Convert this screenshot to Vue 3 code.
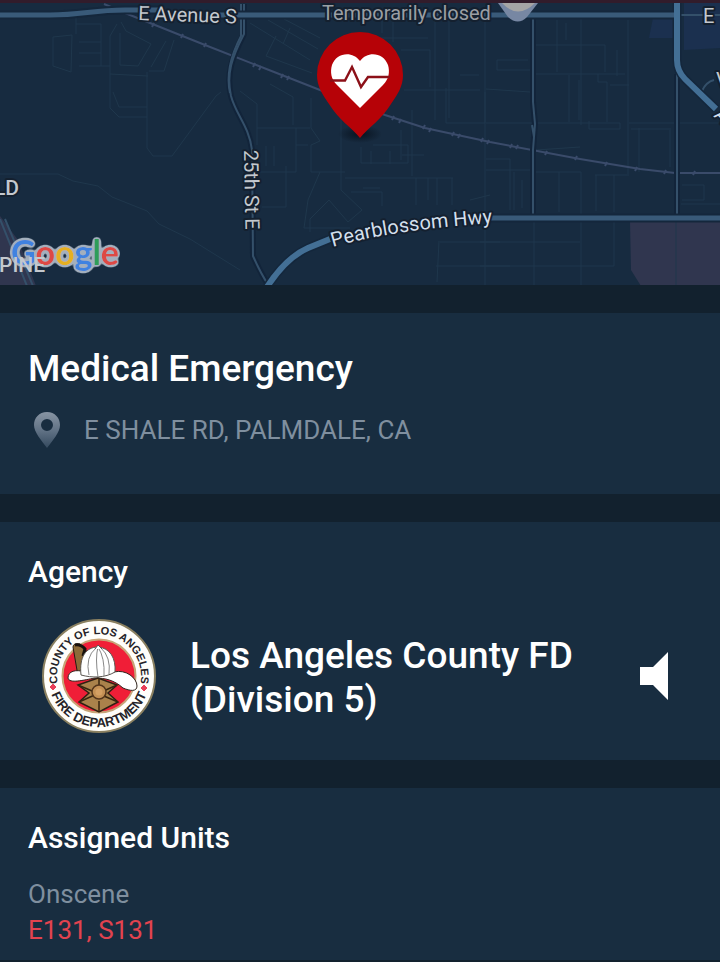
<script setup>
import { ref } from 'vue'

const playing = ref(false)

const agency = 'Los Angeles County FD (Division 5)'
const units = ['E131', 'S131']
const railTicks = [
  [153, 25], [182, 36], [205, 45], [254, 65], [260, 68], [282, 76], [288, 78],
  [393, 118], [400, 121], [424, 127], [430, 130], [453, 134], [459, 136],
  [482, 140], [488, 142], [511, 146], [517, 147], [546, 153], [576, 158],
  [606, 164], [636, 169], [665, 172], [694, 173],
]
const logo = [
  { ch: 'G', color: '#3f82e0' },
  { ch: 'o', color: '#dd4a45' },
  { ch: 'o', color: '#e5b021' },
  { ch: 'g', color: '#3f82e0' },
  { ch: 'l', color: '#2e9d5a' },
  { ch: 'e', color: '#dd4a45' },
]
</script>

<template>
  <main class="page">
    <section class="map-panel" aria-label="Map">
      <svg class="map" viewBox="0 0 720 282">
        <g transform="translate(0 -3)">
          <rect y="3" width="720" height="283" fill="#172b40" />

          <!-- land areas -->
          <path d="M0 216 L18 240 L36 286 H0Z" fill="#30364f" />
          <path d="M630 221 H720 V286 H641 L631 270Z" fill="#30364f" />
          <path d="M653 18 H674 V38 H649Z M684 3 H720 V48 L684 50Z" fill="#1b304f" />

          <!-- minor streets -->
          <g class="minor">
            <path d="M76 16 V34 M76 24 H101 V66 M53 37 L72 35 L71 72 L53 66Z M79 42 H101 M79 53 H101 M79 66 H110 M117 24 L110 36 V108 L119 117 H147 M121 22 L126 31 L151 44 L138 66 L120 65 V33 M110 74 L148 76 M113 92 L119 107 H147 M174 40 L164 71 H149 M166 41 L151 67 M147 72 V148 L153 156 H172 L216 96 L221 92" />
            <path d="M0 174 H58 L73 181 L98 186 L112 197 L147 211 L159 224 L190 239 L240 270" />
            <path d="M268 20 L318 49 M250 23 L310 60 M284 19 L320 38 M276 36 L266 56 L312 73 M290 28 L283 44 M240 91 L257 104 V145 M257 128 H310 M270 84 L293 97 V125 M296 145 H308 M296 128 V172 H258 M266 146 V166 M274 146 V166 M311 98 V128 L320 141 L311 145 V172 H345 M341 113 V190 L362 210 L348 222 L329 200 L310 219 V232 M320 172 L308 200 L304 228 H350 M262 207 H286 V166 M345 178 H453 M373 145 H408 V163 H361 V147 M390 151 V164 M412 110 V176 M371 164 V151 M351 192 H382 V206 M363 188 H380" />
            <path d="M401 130 V160 M402 155 H424 M416 178 V205 M428 178 V200 M437 178 V205 M452 178 V205 M382 18 V33 M370 38 H428 M393 22 V42 M401 50 H430 V87 M435 12 V120 M449 18 V118 M460 75 H479 M404 90 H480 M446 88 V123 H485 V92 M470 200 L490 195 M439 241 L437 282 M440 242 H500 M436 266 H510" />
            <path d="M485 18 V285 M497 60 H528 M497 60 V70 H530 M486 89 L530 92 M557 20 V72 M566 23 V40 M533 45 H605 V72 M581 17 V125 M533 74 H625 M628 20 V174 M617 50 V76 M569 75 V122 M579 80 V120 M598 74 V82 H607 V122 M629 85 H610 M486 123 H620 V129 H589 V121 M629 123 H720 M639 128 V172 M670 128 V167 M631 129 H669 M536 150 L580 147 M486 159 H510 V210 M486 170 H530 M536 172 H581 V285 M514 172 V210 M522 180 V208 M559 172 V212 M596 175 V211 M614 175 V212 M595 175 H629 M682 185 H704 V200 H682 M681 204 H720 M480 242 H580 M480 266 H614 V222 M534 222 V285 M676 222 V285" />
          </g>

          <!-- railway -->
          <path class="rail" d="M104 4 L125 13 L205 45 L320 90 L385 115 L425 128 L490 142 L580 159 L640 169 L675 173 H720" />
          <path v-for="(t, i) in railTicks" :key="i" class="rail" :d="`M${t[0] - 1} ${t[1] + 2} L${t[0] + 1} ${t[1] - 2}`" />

          <!-- secondary roads -->
          <g class="casing">
            <path d="M244 4 V34 C232 57 226 74 231 96 C236 115 249 126 252 150 L253 256 Q261 274 269 286" />
            <path d="M533 17 V102 L535 124 L533 150 V216 M677 74 V216" />
          </g>
          <g class="secondary">
            <path d="M244 4 V34 C232 57 226 74 231 96 C236 115 249 126 252 150 L253 256 Q261 274 269 286" />
            <path d="M241 4 V36 C230 57 226 75 230 93" />
            <path d="M533 17 V102 L535 124 L533 150 V216 M532 125 L534 137 M677 74 V216 M678 15 H720 M702 91 Q706 82 714 80" />
            <path d="M0 219 L27 286 M5 219 L33 286" />
          </g>

          <!-- main roads -->
          <g class="casing-wide">
            <path d="M0 15 H50 C83 15 92 10 125 10 H160 M205 15 H677 M677 3 V60 Q677 71 685 79 L716 109 M267 287 C280 267 292 255 308 248 L330 239 M488 218 H720" />
          </g>
          <path class="primary" d="M0 15 H50 C83 15 92 10 125 10 H160 M205 15 H677" />
          <path class="primary" d="M488 218 H720" />
          <path class="highway" d="M677 3 V60 Q677 71 685 79 L716 109 M267 287 C280 267 292 255 308 248 L330 239" />

          <!-- neighbouring place marker -->
          <path d="M498 3 H538 L527 17 Q518 26 508 17Z" fill="#7787a3" />
          <path d="M502 3 H535 Q518 20 502 3Z" fill="#a5a5a5" />

          <!-- street and place names -->
          <g class="label">
            <text x="138" y="20" transform="rotate(2 138 20)">E Avenue S</text>
            <text x="703" y="23">E</text>
            <text x="716" y="87">V</text>
            <text class="bright" transform="translate(713 116) rotate(44)">A</text>
            <text transform="translate(244 150) rotate(89)">25th St E</text>
            <path id="pearblossom" d="M333 247 Q390 230 495 223" fill="none" stroke="none" />
            <text class="bright"><textPath href="#pearblossom">Pearblossom Hwy</textPath></text>
            <text class="muted" x="322" y="20">Temporarily closed</text>
            <text class="place" x="-6" y="195">LD</text>
          </g>

          <!-- map provider logo -->
          <defs>
            <filter id="logo-rim" x="-10%" y="-20%" width="120%" height="140%">
              <feGaussianBlur in="SourceAlpha" stdDeviation="2" />
              <feComponentTransfer result="spread">
                <feFuncA type="linear" slope="9" intercept="-0.7" />
              </feComponentTransfer>
              <feFlood flood-color="#a3afbd" />
              <feComposite in2="spread" operator="in" result="rim" />
              <feMerge>
                <feMergeNode in="rim" />
                <feMergeNode in="SourceGraphic" />
              </feMerge>
            </filter>
          </defs>
          <text class="logo" x="11" y="265" filter="url(#logo-rim)"><tspan v-for="(l, i) in logo" :key="i" :fill="l.color">{{ l.ch }}</tspan></text>
          <text class="place over-logo" x="-1" y="272">PINE</text>

          <!-- incident pin -->
          <defs>
            <radialGradient id="pin-shadow">
              <stop offset="0" stop-color="#07101b" stop-opacity="0.9" />
              <stop offset="1" stop-color="#07101b" stop-opacity="0" />
            </radialGradient>
          </defs>
          <ellipse cx="360" cy="134" rx="22" ry="9" fill="url(#pin-shadow)" />
          <path d="M360 138 C352 128 338 119 329 104 C322 94 317 86 317 75 A43 43 0 0 1 403 75 C403 86 398 94 391 104 C382 119 368 128 360 138Z" fill="#b60207" />
          <path d="M360 108 L337 85 C331 79 330 72 332 65 C336 53 352 50 360 61 C368 50 384 53 388 65 C390 72 389 79 383 85Z" fill="#fff" />
          <path d="M330 80.500 H345 L352 67 L361 87 L368 77 H390" fill="none" stroke="#8c1018" stroke-width="2.400" />
        </g>
      </svg>
    </section>

    <section class="card incident">
      <h1>Medical Emergency</h1>
      <p class="address">
        <svg class="place-icon" viewBox="0 0 28 38" aria-hidden="true">
          <defs>
            <linearGradient id="pin-fade" x1="0" y1="0" x2="0" y2="1">
              <stop offset="0" stop-color="#8794a3" />
              <stop offset="0.500" stop-color="#627386" />
              <stop offset="1" stop-color="#354a5f" />
            </linearGradient>
          </defs>
          <path fill-rule="evenodd" d="M14 1 C6 1 1 7 1 14 C1 21 8 29 14 37 C20 29 27 21 27 14 C27 7 22 1 14 1Z M14 8 A6 6 0 1 1 14 20 A6 6 0 1 1 14 8Z" fill="url(#pin-fade)" />
        </svg>
        <span>E SHALE RD, PALMDALE, CA</span>
      </p>
    </section>

    <section class="card agency">
      <h2>Agency</h2>
      <div class="agency-row">
        <svg class="seal" viewBox="0 0 116 116">
          <defs>
            <path id="seal-top" d="M18.500 72.400 A42 42 0 1 1 97.500 72.400" />
            <path id="seal-bottom" d="M7 58 A51 51 0 0 0 109 58" />
          </defs>
          <circle cx="58" cy="58" r="56" fill="#fffefa" stroke="#8a8060" stroke-width="2" />
          <circle cx="58" cy="58" r="36.500" fill="#f01e37" stroke="#c7a477" stroke-width="2" />
          <text class="seal-text seal-long" text-anchor="middle"><textPath href="#seal-top" startOffset="50%">COUNTY OF LOS ANGELES</textPath></text>
          <text class="seal-text" text-anchor="middle"><textPath href="#seal-bottom" startOffset="50%">FIRE DEPARTMENT</textPath></text>
          <path d="M12 66 L15 69 L12 72 L9 69Z M103 67 L106 70 L103 73 L100 70Z" fill="#e8405a" stroke="#e8405a" />
          <!-- helmet -->
          <path d="M37 58 L32 29 Q32 25 39 26 L45 32 V58Z" fill="#8c6b38" stroke="#251b12" />
          <path d="M34 27 Q40 26 44 31 L42 38" fill="none" stroke="#17110d" stroke-width="3" />
          <path d="M27 60 C27 53 35 51 44 54 H73 C85 51 96 60 96 68 C96 74 89 73 82 70 C73 62 64 60 54 60 C43 62 28 66 27 60Z" fill="#fff" stroke="#30251e" />
          <path d="M40 57 C38 39 45 29 57 29 C69 30 75 40 74 54 C64 60 51 60 40 57Z" fill="#fff" stroke="#5a5650" />
          <path d="M48 57 Q44 39 55 30 M57 59 Q54 40 57 29 Q64 40 63 58 M68 56 Q70 39 60 30" fill="none" stroke="#888" />
          <path d="M54 31 L57 27 L61 31" fill="#fff" stroke="#555" />
          <!-- maltese cross -->
          <path d="M37 67 L57 60 L76 67 L67 75 L77 84 L58 94 L38 84 L48 75Z" fill="#aa824b" stroke="#2f2013" stroke-width="1.500" />
          <path d="M37 67 L77 84 M76 67 L38 84 M58 60 V67 M58 83 V94" stroke="#38260f" stroke-width="1.500" />
          <circle cx="58" cy="74" r="7" fill="#c49054" stroke="#54351b" stroke-width="1.500" />
          <circle cx="58" cy="74" r="3.500" fill="#d5a063" />
        </svg>
        <p class="agency-name">{{ agency }}</p>
        <button class="speaker" type="button" aria-label="Listen" :aria-pressed="playing" @click="playing = !playing">
          <svg viewBox="0 0 28 48" aria-hidden="true"><path d="M0 15 H13 L28 0 V48 L13 33 H0Z" fill="#fff" /></svg>
        </button>
      </div>
    </section>

    <section class="card units">
      <h2>Assigned Units</h2>
      <p class="status">Onscene</p>
      <p class="unit-list">{{ units.join(', ') }}</p>
    </section>
  </main>
</template>

<style>
body {
  background: #12212e;
}
</style>

<style scoped>
.page {
  display: flex;
  flex-direction: column;
  gap: 28px;
  font-family: Roboto, "Liberation Sans", sans-serif;
  color: #fff;
  background: #12212e;
  padding-bottom: 2px;
}

h1,
h2,
p {
  margin: 0;
}

.map-panel {
  border-top: 3px solid #321c2b;
  overflow: hidden;
}

.map {
  display: block;
  width: 100%;
}

.minor {
  fill: none;
  stroke: #1f374c;
  stroke-width: 1;
}

.rail {
  fill: none;
  stroke: #3a4b6a;
  stroke-width: 2;
}

.casing {
  fill: none;
  stroke: #12243a;
  stroke-width: 6;
}

.casing-wide {
  fill: none;
  stroke: #14273c;
  stroke-width: 9;
}

.secondary {
  fill: none;
  stroke: #34506a;
  stroke-width: 2;
}

.primary {
  fill: none;
  stroke: #395a79;
  stroke-width: 5;
}

.highway {
  fill: none;
  stroke: #436f95;
  stroke-width: 6;
}

.label {
  font-size: 20px;
  fill: #c3c8ce;
  stroke: #14202f;
  stroke-width: 4px;
  stroke-linejoin: round;
  paint-order: stroke;
}

.bright {
  fill: #d3dfec;
}

.muted {
  fill: #9b9fa4;
}

.place {
  font-size: 21px;
  font-weight: 500;
}

.over-logo {
  fill: #c3c8ce;
}

.logo {
  font-family: Lato, sans-serif;
  font-size: 34px;
  font-weight: 700;
}

.card {
  background: #182d40;
  padding: 32px 28px;
}

h1,
.agency-name {
  font-size: 37px;
  font-weight: 500;
  line-height: 44px;
}

h2 {
  font-size: 30px;
  font-weight: 500;
  line-height: 36px;
}

.incident {
  padding-top: 34px;
  padding-bottom: 44px;
}

.address {
  display: flex;
  align-items: center;
  gap: 23px;
  margin-top: 19px;
  padding-left: 5px;
  font-size: 26px;
  line-height: 40px;
  color: #7f8f9f;
}

.place-icon {
  width: 28px;
  height: 38px;
}

.agency {
  padding-bottom: 26px;
}

.agency-row {
  display: flex;
  align-items: center;
  margin-top: 28px;
  padding: 0 24px 0 13px;
}

.seal {
  flex: none;
  width: 116px;
  height: 116px;
}

.seal-text {
  font-family: "Liberation Sans", sans-serif;
  font-size: 13px;
  font-weight: 700;
  fill: #252328;
}

.seal-long {
  font-size: 11px;
}

.agency-name {
  flex: 1;
  margin-left: 33px;
  padding: 4px 48px 0 0;
}

.speaker {
  flex: none;
  padding: 0;
  border: 0;
  background: none;
  cursor: pointer;
}

.speaker svg {
  display: block;
  width: 28px;
  height: 48px;
}

.units {
  padding-bottom: 12px;
}

.status {
  margin-top: 20px;
}

.status,
.unit-list {
  font-size: 26px;
  line-height: 36px;
  color: #7f8f9f;
}

.unit-list {
  color: #e2434f;
}
</style>
